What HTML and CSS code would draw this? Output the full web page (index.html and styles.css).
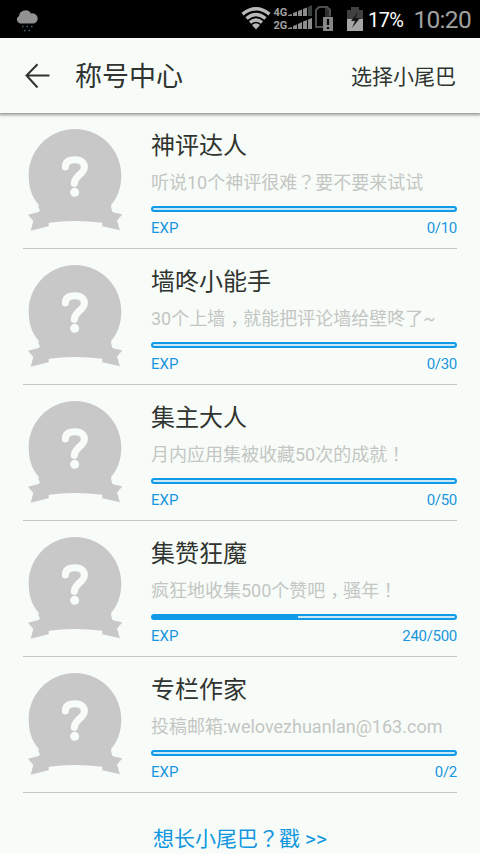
FILE: index.html
```html
<!DOCTYPE html>
<html lang="zh-CN">
<head>
<meta charset="utf-8">
<title>称号中心</title>
<link rel="stylesheet" href="styles.css">
</head>
<body>
<svg class="defs" width="0" height="0" aria-hidden="true">
  <symbol id="badge" viewBox="39 39 282 312">
    <path fill="#c8c8c8" d="M180 42C257 42 319 104 319 182C319 218 307 248 289 269L288 275L291 288L294 292L322 298L306 317L315 346L262 334V323Q180 313 101 323V334L47 347L55 318L39 299L68 292L75 288L70 275L71 269C52 248 41 218 41 182C41 104 103 42 180 42Z"/>
    <path fill="none" stroke="#f8fcf8" stroke-width="21" stroke-linecap="round" d="M151 156C151 140 163 134 180 134C198 134 208 143 208 156C208 178 180 179 178 205"/>
    <circle cx="179" cy="232" r="13.500" fill="#f8fcf8"/>
  </symbol>
</svg>
<div class="screen">
  <div class="status">
    <svg class="weather" width="24" height="26" viewBox="0 0 24 26">
      <path fill="#929292" d="M4 15.500A4 4 0 0 1 3 8A6.500 6.500 0 0 1 15 5.500A5 5 0 1 1 18 15.500Z"/>
      <path stroke="#41666d" stroke-width="1.500" stroke-dasharray="1.500 3" d="M6 18.500H17M8 22.500H15"/>
    </svg>
    <svg class="signals" width="94" height="38" viewBox="240 0 94 38">
      <g fill="none" stroke="#b8b8b8" stroke-width="3.400">
        <path d="M242.500 14.200Q256 3.500 269.500 14.200M246.500 18.500Q256 10.500 265.500 18.500M250 22.500Q256 17.500 262 22.500"/>
      </g>
      <path fill="#b8b8b8" d="M252 25Q256 21.500 260 25L256 29.500Z"/>
      <g class="net" fill="#a0a0a0"><text x="273.500" y="15.500">4G</text><text x="273.500" y="28.500">2G</text></g>
      <path fill="#8c8c8c" d="M288 16V15L292 14V16ZM293 16V13L297 11.500V16ZM298 16V11L302 9.500V16ZM303 16V9L307 7.500V16ZM288 29V28L292 27V29ZM293 29V26L297 24.500V29ZM298 29V24L302 22V29ZM303 29V21.500L307 20V29ZM308 29V19.500L312 18V29Z"/>
      <path fill="#3c403c" d="M308 16V7L312 5V16Z"/>
      <path fill="#303030" d="M325 6L331 10V17H325Z"/>
      <path fill="none" stroke="#505050" stroke-width="2" d="M323 27H316V10L319 7H327L330 10V16"/>
      <path fill="#888" d="M323 17H333V31H323Z"/>
      <path stroke="#050505" stroke-width="2.200" d="M328 19V25M328 27V29"/>
    </svg>
    <svg class="battery" width="18" height="26" viewBox="0 0 18 26">
      <path fill="#404040" d="M1 3H5V0H13V3H17V12H1Z"/>
      <path fill="#a5a5a5" d="M1 12H17V24H1Z"/>
      <path fill="#181818" d="M12 5L5 14H9L6 21L14 11H9.500Z"/>
    </svg>
    <span class="percent">17%</span>
    <span class="clock">10:20</span>
  </div>
  <header class="header">
    <svg class="back" width="26" height="26" viewBox="0 0 26 26"><path fill="none" stroke="#303430" stroke-width="2" d="M25.500 12.500H2.500M13.500 1.200L2.500 12.500L13.500 24.500"/></svg>
    <h1>称号中心</h1>
    <span class="action">选择小尾巴</span>
  </header>
  <main class="list">
    <section class="item">
      <svg class="medal"><use href="#badge"/></svg>
      <div class="info">
        <h2>神评达人</h2>
        <p>听说10个神评很难<span class="mark" lang="ja">？</span>要不要来试试</p>
        <div class="bar"><div class="fill"></div></div>
        <div class="exp"><span>EXP</span><span class="count">0/10</span></div>
      </div>
    </section>
    <section class="item">
      <svg class="medal"><use href="#badge"/></svg>
      <div class="info">
        <h2>墙咚小能手</h2>
        <p>30个上墙<span class="comma">，</span>就能把评论墙给壁咚了~</p>
        <div class="bar"><div class="fill"></div></div>
        <div class="exp"><span>EXP</span><span class="count">0/30</span></div>
      </div>
    </section>
    <section class="item">
      <svg class="medal"><use href="#badge"/></svg>
      <div class="info">
        <h2>集主大人</h2>
        <p>月内应用集被收藏50次的成就<span class="mark" lang="ja">！</span></p>
        <div class="bar"><div class="fill"></div></div>
        <div class="exp"><span>EXP</span><span class="count">0/50</span></div>
      </div>
    </section>
    <section class="item">
      <svg class="medal"><use href="#badge"/></svg>
      <div class="info">
        <h2>集赞狂魔</h2>
        <p>疯狂地收集500个赞吧<span class="comma">，</span>骚年<span class="mark" lang="ja">！</span></p>
        <div class="bar"><div class="fill" style="width:48%"></div></div>
        <div class="exp"><span>EXP</span><span class="count">240/500</span></div>
      </div>
    </section>
    <section class="item">
      <svg class="medal"><use href="#badge"/></svg>
      <div class="info">
        <h2>专栏作家</h2>
        <p>投稿邮箱:welovezhuanlan@163.com</p>
        <div class="bar"><div class="fill"></div></div>
        <div class="exp"><span>EXP</span><span class="count">0/2</span></div>
      </div>
    </section>
  </main>
  <footer class="more">想长小尾巴<span class="mark" lang="ja">？</span>戳 &gt;&gt;</footer>
</div>
</body>
</html>
```
FILE: styles.css
```css
* { box-sizing: border-box; margin: 0; padding: 0; }
body {
  background: #f8fcf8;
  color: #303430;
  font-family: Roboto, "Noto Sans CJK SC", sans-serif;
}
h1, h2 { font-weight: 400; }
svg { display: block; flex: none; }
.defs { position: absolute; }
.screen {
  width: 480px;
  height: 854px;
  overflow: hidden;
  display: flex;
  flex-direction: column;
}
.status {
  flex: none;
  height: 38px;
  background: #000;
  display: flex;
  align-items: center;
  padding: 0 9px 0 16px;
}
.weather { margin-top: 4px; }
.signals { margin-left: 200px; }
.net { font: 700 11px Roboto, sans-serif; }
.battery { margin: 2px 0 0 12px; }
.percent {
  width: 38px;
  margin-left: 4px;
  color: #fff;
  font-size: 20px;
  line-height: 38px;
  letter-spacing: -0.6px;
  padding-top: 2px;
}
.clock {
  margin-left: auto;
  color: #a0a0a0;
  font-size: 24.5px;
  line-height: 38px;
  letter-spacing: -0.7px;
  padding-top: 2px;
}
.header {
  flex: none;
  height: 75px;
  display: flex;
  align-items: center;
  padding: 0 24px;
  box-shadow: 0 1px 3px 1px rgba(0, 0, 0, 0.4);
  z-index: 1;
}
.header h1 {
  font-size: 27px;
  line-height: 40px;
  margin-left: 25px;
  padding-top: 2px;
}
.action { margin-left: auto; padding-top: 2px; font-size: 21px; line-height: 32px; }
.list { flex: none; padding: 0 23px; }
.item {
  height: 136px;
  border-bottom: 1px solid #c3c6c3;
  display: flex;
}
.medal { width: 94px; height: 104px; margin: 15px 29px 0 5px; }
.info { flex: 1; padding-top: 15px; }
.info h2 { font-size: 24px; line-height: 36px; }
.info p {
  height: 26px;
  margin-top: 6px;
  color: #c3c6c3;
  font-size: 18px;
  line-height: 26px;
  white-space: nowrap;
}
.mark { font-family: "Noto Sans CJK JP", sans-serif; line-height: 1; }
.comma { font-feature-settings: "halt"; padding: 0 4px 0 5px; }
.bar {
  height: 6px;
  margin-top: 10px;
  border: 2px solid #109ae8;
  border-radius: 3px;
  background: #c8e8f8;
}
.fill { width: 0; height: 2px; background: #109ae8; }
.exp {
  display: flex;
  justify-content: space-between;
  margin-top: 6px;
  color: #1896e0;
  font-size: 15px;
  line-height: 20px;
}
.count { letter-spacing: -0.3px; }
.more {
  text-align: center;
  margin-top: 30px;
  font-size: 21px;
  line-height: 32px;
  color: #1096e0;
  white-space: nowrap;
}
```
